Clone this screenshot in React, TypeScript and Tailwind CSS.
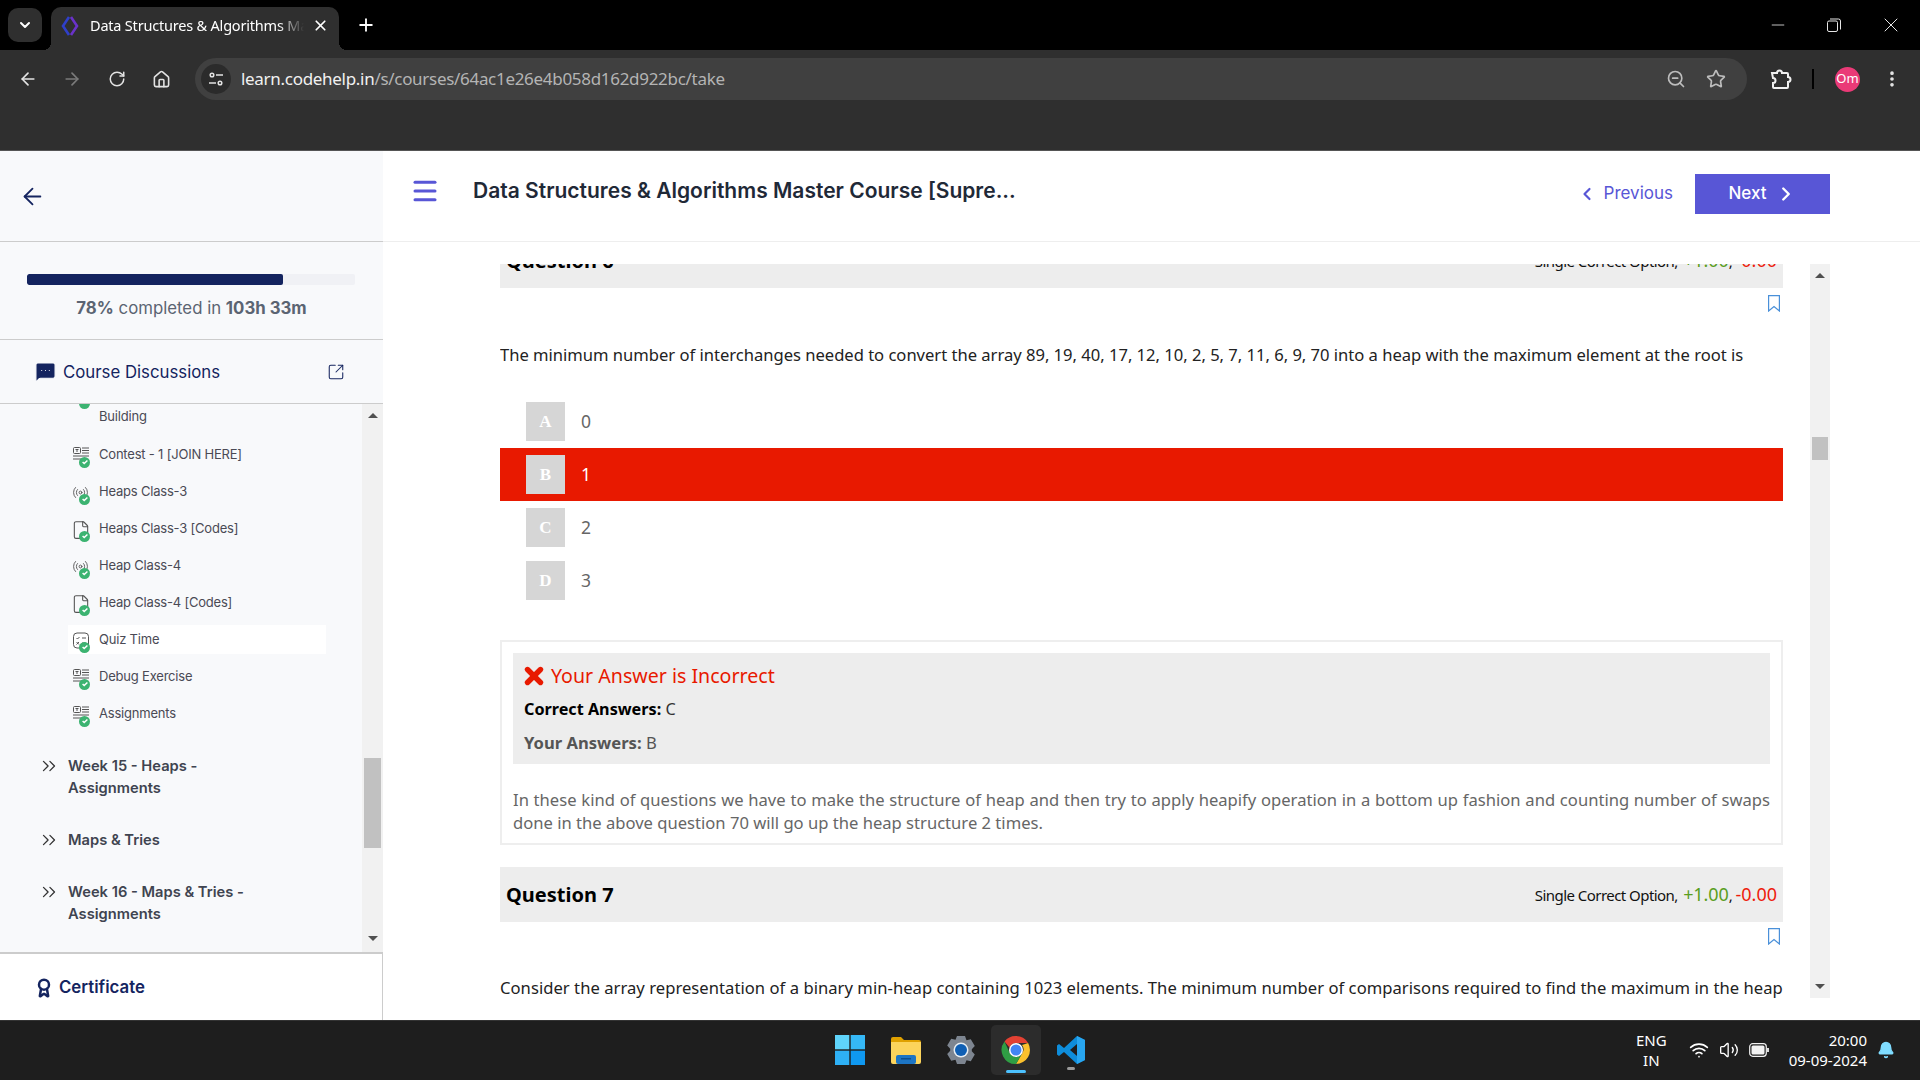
import { ChevronDown, ChevronLeft, ChevronRight, X, Plus, ArrowLeft, ArrowRight, RotateCw, Home, ZoomOut, Star, EllipsisVertical, Minus, Menu, ChevronsRight, SquareArrowOutUpRight, Radio, File, MessageSquareMore, Award, Volume2, Wifi, Bell } from "lucide-react";

const lessons = [
  { title: "Contest - 1 [JOIN HERE]", icon: "text" },
  { title: "Heaps Class-3", icon: "live" },
  { title: "Heaps Class-3 [Codes]", icon: "file" },
  { title: "Heap Class-4", icon: "live" },
  { title: "Heap Class-4 [Codes]", icon: "file" },
  { title: "Quiz Time", icon: "quiz", active: true },
  { title: "Debug Exercise", icon: "text" },
  { title: "Assignments", icon: "text" },
];

function Check() {
  return (
    <span className="absolute left-[7px] top-[10px] flex h-[11px] w-[11px] items-center justify-center rounded-full bg-[#3cb371]">
      <svg viewBox="0 0 10 10" className="h-[8px] w-[8px]" fill="none" stroke="white" strokeWidth="1.8">
        <path d="M2 5l2 2 4-4" />
      </svg>
    </span>
  );
}

function LessonIcon({ kind }: { kind: string }) {
  return (
    <span className="relative mr-[9px] block h-[16px] w-[18px] shrink-0 text-[#555]">
      {kind === "text" && (
        <svg viewBox="0 0 18 16" className="h-[16px] w-[18px]" fill="none" stroke="currentColor" strokeWidth="1">
          <rect x="1.5" y="0.5" width="7" height="6" rx="1" />
          <path d="M10 1h7M10 3.5h7M10 6h7M1 9h16M1 12h9" />
          <path d="M3.5 2.5h3M5 2.5v2.5" />
        </svg>
      )}
      {kind === "live" && <Radio size={17} strokeWidth={1.3} />}
      {kind === "file" && <File size={20} strokeWidth={1.3} className="-ml-[1px] -mt-[1px]" />}
      {kind === "quiz" && (
        <svg viewBox="0 0 18 18" className="h-[18px] w-[18px]" fill="none" stroke="currentColor" strokeWidth="1">
          <rect x="1.5" y="1" width="15" height="15" rx="3.5" />
          <path d="M10 6h4M10 11h4M4.5 6l1 1 2-2M4.5 10l2.5 2.5M7 10l-2.5 2.5" />
        </svg>
      )}
      <Check />
    </span>
  );
}

function Section({ lines, className }: { lines: string[]; className: string }) {
  return (
    <div className={`flex pl-[38px] ${className}`}>
      <ChevronsRight size={22} strokeWidth={1.4} className="mr-[8px] shrink-0 text-[#333]" />
      <div className="text-[14.7px] font-semibold leading-[22px] text-[#3f4450]">
        {lines.map((line) => (
          <div key={line}>{line}</div>
        ))}
      </div>
    </div>
  );
}

function BookmarkIcon() {
  return (
    <svg viewBox="0 0 12 17" className="h-[17px] w-[12px]" fill="none" stroke="#4a90d9" strokeWidth="1.2">
      <path d="M0.6 0.6h10.800v15.400L6 11.500 0.600 16z" />
    </svg>
  );
}

function ChromeBar() {
  return (
    <div className="h-[151px] shrink-0 border-b border-[#555] bg-[#2f2f2f] font-['Noto_Sans',sans-serif] text-white">
      <div className="flex h-[50px] items-end bg-black pl-[8px]">
        <div className="mb-[8px] mr-[9px] flex h-[34px] w-[34px] items-center justify-center rounded-[10px] bg-[#2f2f2f]">
          <ChevronDown size={16} strokeWidth={3} />
        </div>
        <div className="relative flex h-[43px] w-[288px] items-center rounded-t-[10px] bg-[#2f2f2f] pb-[6px] pl-[9px]">
          <span className="absolute -left-[8px] bottom-0 h-[8px] w-[8px] bg-[radial-gradient(circle_at_0_0,transparent_8px,#2f2f2f_8px)]" />
          <span className="absolute -right-[8px] bottom-0 h-[8px] w-[8px] bg-[radial-gradient(circle_at_100%_0,transparent_8px,#2f2f2f_8px)]" />
          <svg viewBox="0 0 20 20" className="mr-[10px] h-[22px] w-[20px] shrink-0" fill="none" strokeWidth="2.6">
            <path d="M9 1L3 10l6 9" stroke="#2f3fc9" />
            <path d="M11 1l6 9-6 9" stroke="#6a32c9" />
          </svg>
          <span className="w-[214px] overflow-hidden whitespace-nowrap text-[14.5px] tracking-[-0.2px] [mask-image:linear-gradient(to_right,black_88%,transparent)]">
            Data Structures & Algorithms Master Course
          </span>
          <X size={17} strokeWidth={2.4} className="ml-[8px]" />
        </div>
        <Plus size={20} strokeWidth={2.2} className="mb-[15px] ml-[17px]" />
        <div className="mb-[13px] ml-auto flex items-center text-[#e6e6e6]">
          <Minus size={20} strokeWidth={1} className="mr-[39px]" />
          <svg viewBox="0 0 14 14" className="mr-[38px] h-[14px] w-[14px]" fill="none" stroke="currentColor">
            <rect x="0.5" y="3" width="10" height="10.5" rx="1.5" />
            <path d="M3 1h8.5a2 2 0 0 1 2 2v8.5" />
          </svg>
          <X size={24} strokeWidth={1} className="mr-[17px]" />
        </div>
      </div>
      <div className="flex h-[58px] items-center">
        <div className="flex w-[195px] shrink-0 items-center text-[#e3e3e3]">
          <ArrowLeft size={20} className="ml-[18px]" />
          <ArrowRight size={20} className="ml-[24px] text-[#7b7b7b]" />
          <RotateCw size={18} className="ml-[26px]" />
          <Home size={19} className="ml-[26px]" />
        </div>
        <div className="flex h-[42px] w-[1552px] items-center rounded-full bg-[#404040] pl-[6px] pr-[21px]">
          <div className="mr-[10px] flex h-[30px] w-[30px] items-center justify-center rounded-full bg-[#2b2b2b]">
            <svg viewBox="0 0 16 16" className="h-[16px] w-[16px]" fill="none" stroke="#e3e3e3" strokeWidth="1.5">
              <circle cx="4" cy="4" r="1.8" />
              <path d="M8 4h7M1 12h7" />
              <circle cx="12" cy="12" r="1.8" />
            </svg>
          </div>
          <span className="text-[17px] tracking-[-0.3px] text-[#f1f1f1]">
            learn.codehelp.in<span className="text-[#b4b4b4]">/s/courses/64ac1e26e4b058d162d922bc/take</span>
          </span>
          <ZoomOut size={20} className="ml-auto mr-[20px] text-[#bdbdbd]" />
          <Star size={20} className="text-[#bdbdbd]" />
        </div>
        <svg viewBox="0 0 22 22" className="ml-[23px] h-[22px] w-[22px]" fill="none" stroke="#f0f0f0" strokeWidth="2">
          <path d="M2 5h5a2.500 2.500 0 0 1 5 0h5a1 1 0 0 1 1 1v3a2.500 2.500 0 0 1 0 5v5a1 1 0 0 1-1 1H4a1 1 0 0 1-1-1v-4a2.500 2.500 0 0 0 0-5z" />
        </svg>
        <span className="ml-[20px] h-[20px] w-[2px] bg-black" />
        <span className="ml-[21px] flex h-[25px] w-[25px] items-center justify-center rounded-full bg-[#ea3a77] text-[13px]">Om</span>
        <EllipsisVertical size={20} strokeWidth={2.4} className="ml-[22px] text-[#e6e6e6]" />
      </div>
    </div>
  );
}

function Sidebar() {
  return (
    <aside className="flex w-[383px] shrink-0 flex-col bg-[#f8f9fb] font-['Inter',sans-serif]">
      <div className="flex h-[91px] shrink-0 items-center border-b border-[#ccc] pl-[19px]">
        <ArrowLeft size={27} strokeWidth={1.6} className="text-[#14245f]" />
      </div>
      <div className="h-[98px] shrink-0 border-b border-[#ccc] px-[27px] pt-[32px]">
        <div className="h-[11px] w-[328px] overflow-hidden rounded-[2px] bg-[#f0f1f5]">
          <div className="h-full w-[256px] rounded-[2px] bg-[#14245f]" />
        </div>
        <p className="mt-[12px] text-center text-[16.8px] leading-[22px] text-[#5b6472]">
          <b className="font-bold">78%</b> completed in <b className="font-bold">103h 33m</b>
        </p>
      </div>
      <div className="flex h-[64px] shrink-0 items-center border-b border-[#ccc] pl-[34px] pr-[38px] text-[#14245f]">
        <MessageSquareMore size={23} fill="#14245f" stroke="#f8f9fb" strokeWidth={1.2} className="mr-[6px]" />
        <span className="mt-[2px] text-[16.8px]">Course Discussions</span>
        <SquareArrowOutUpRight size={18} strokeWidth={1.4} className="ml-auto" />
      </div>
      <div className="flex h-[548px] shrink-0 overflow-hidden">
        <div className="min-w-0 flex-1 text-[13px] tracking-[-0.2px] text-[#4a4a55]">
          <div className="relative h-[25px] pl-[99px] pt-[2px] leading-[20px]">
            <span className="absolute left-[79px] -top-[4px] h-[9px] w-[11px] rounded-b-full bg-[#3cb371]" />
            Building
          </div>
          <div className="mt-[11px]">
            {lessons.map((lesson) => (
              <div key={lesson.title} className={`ml-[68px] mb-[8px] flex h-[29px] w-[258px] items-center pl-[4px] ${lesson.active ? "bg-white" : ""}`}>
                <LessonIcon kind={lesson.icon} />
                <span>{lesson.title}</span>
              </div>
            ))}
          </div>
          <div className="tracking-normal">
            <Section lines={["Week 15 - Heaps -", "Assignments"]} className="mt-[27px]" />
            <Section lines={["Maps & Tries"]} className="mt-[30px]" />
            <Section lines={["Week 16 - Maps & Tries -", "Assignments"]} className="mt-[30px]" />
          </div>
        </div>
        <div className="relative w-[21px] shrink-0 bg-[#f1f1f1]">
          <span className="absolute left-[6px] top-[9px] h-0 w-0 border-x-[5px] border-b-[5px] border-x-transparent border-b-[#505050]" />
          <span className="absolute left-[2px] top-[354px] h-[90px] w-[17px] bg-[#c1c1c1]" />
          <span className="absolute bottom-[11px] left-[6px] h-0 w-0 border-x-[5px] border-t-[5px] border-x-transparent border-t-[#505050]" />
        </div>
      </div>
      <div className="flex flex-1 items-center border-r border-t-2 border-[#ccc] bg-white pl-[34px] pt-[2px] text-[#14245f]">
        <Award size={20} strokeWidth={3} className="mr-[5px]" />
        <span className="text-[16.8px] font-semibold">Certificate</span>
      </div>
    </aside>
  );
}

function Question({ n }: { n: number }) {
  return (
    <div className="flex h-[55px] items-center justify-between bg-[#ededed] pl-[6px] pr-[6px]">
      <span className="text-[20px] font-bold text-black">Question {n}</span>
      <span className="text-[15px] tracking-[-0.55px] text-[#111]">
        Single Correct Option, <span className="ml-[2px] text-[18px] tracking-[-0.1px] text-[#5a9e1f]">+1.00</span>, <span className="text-[18px] tracking-normal text-[#ee1c0c]">-0.00</span>
      </span>
    </div>
  );
}

function Option({ letter, value, picked }: { letter: string; value: string; picked?: boolean }) {
  return (
    <div className={`flex h-[53px] items-center pl-[26px] ${picked ? "bg-[#e81900] text-white" : "text-[#666]"}`}>
      <span className="flex h-[39px] w-[39px] items-center justify-center bg-[#d6d6d6] font-['Liberation_Serif',serif] text-[17px] font-bold text-white">
        {letter}
      </span>
      <span className="ml-[16px] text-[17.5px]">{value}</span>
    </div>
  );
}

function Main() {
  return (
    <main className="flex min-w-0 flex-1 flex-col bg-white">
      <header className="flex h-[91px] shrink-0 items-center border-b border-[#eee] pb-[4px] pl-[27px] pr-[90px] font-['Inter',sans-serif]">
        <Menu size={30} strokeWidth={2.4} className="-mt-[6px] text-[#5856d6]" />
        <h1 className="-mt-[6px] ml-[33px] text-[21px] font-semibold text-[#1f2937]">Data Structures & Algorithms Master Course [Supre...</h1>
        <ChevronLeft size={20} strokeWidth={2.6} className="ml-auto text-[#5856d6]" />
        <span className="ml-[7px] text-[17px] text-[#5856d6]">Previous</span>
        <button className="ml-[22px] flex h-[40px] w-[135px] items-center justify-center bg-[#5856d6] text-[17px] font-medium text-white">
          Next
          <ChevronRight size={22} strokeWidth={2.6} className="ml-[8px]" />
        </button>
      </header>
      <div className="mt-[22px] flex h-[734px] pl-[117px] font-['Noto_Sans',sans-serif]">
        <div className="w-[1283px] overflow-hidden">
          <div className="-mt-[31px] text-[16.6px]">
            <Question n={6} />
            <div className="flex h-[24px] justify-end pr-[3px] pt-[7px]">
              <BookmarkIcon />
            </div>
            <p className="mt-[31px] whitespace-nowrap leading-[24px] tracking-[-0.02px] text-[#222]">
              The minimum number of interchanges needed to convert the array 89, 19, 40, 17, 12, 10, 2, 5, 7, 11, 6, 9, 70 into a heap with the maximum element at the root is
            </p>
            <div className="mt-[28px]">
              <Option letter="A" value="0" />
              <Option letter="B" value="1" picked />
              <Option letter="C" value="2" />
              <Option letter="D" value="3" />
            </div>
            <div className="mt-[33px] h-[205px] border-2 border-[#eee] px-[11px] pt-[11px] text-[#666]">
              <div className="h-[111px] bg-[#ededed] pl-[11px] pt-[9px]">
                <div className="flex h-[28px] items-center text-[19.6px] text-[#e81900]">
                  <X size={26} strokeWidth={5} className="-ml-[3px] mr-[4px]" />
                  Your Answer is Incorrect
                </div>
                <p className="mt-[7px] text-[16.2px] leading-[24px] text-[#333]">
                  <b className="text-black">Correct Answers:</b> C
                </p>
                <p className="mt-[10px] leading-[24px] text-[#555]">
                  <b>Your Answers:</b> B
                </p>
              </div>
              <p className="mt-[24px] text-justify leading-[23px]">
                In these kind of questions we have to make the structure of heap and then try to apply heapify operation in a bottom up fashion and counting number of swaps done in the above question 70 will go up the heap structure 2 times.
              </p>
            </div>
            <div className="mt-[22px]">
              <Question n={7} />
            </div>
            <div className="flex h-[24px] justify-end pr-[3px] pt-[6px]">
              <BookmarkIcon />
            </div>
            <p className="mt-[30px] whitespace-nowrap leading-[24px] tracking-[0.04px] text-[#222]">
              Consider the array representation of a binary min-heap containing 1023 elements. The minimum number of comparisons required to find the maximum in the heap
            </p>
          </div>
        </div>
        <div className="relative ml-[27px] w-[20px] shrink-0 bg-[#f1f1f1]">
          <span className="absolute left-[5px] top-[9px] h-0 w-0 border-x-[5px] border-b-[5px] border-x-transparent border-b-[#505050]" />
          <span className="absolute left-[2px] top-[173px] h-[23px] w-[16px] bg-[#c1c1c1]" />
          <span className="absolute bottom-[9px] left-[5px] h-0 w-0 border-x-[5px] border-t-[5px] border-x-transparent border-t-[#505050]" />
        </div>
      </div>
    </main>
  );
}

function Taskbar() {
  return (
    <div className="grid h-[60px] shrink-0 grid-cols-[1fr_auto_1fr] items-center border-t border-[#333] bg-[#1e1e1e] pb-[1px] font-['Noto_Sans',sans-serif] text-white">
      <div />
      <div className="flex items-center">
        <svg viewBox="0 0 30 30" className="h-[30px] w-[30px]">
          <rect x="0" y="0" width="14.3" height="14.3" fill="#5fd4fb" />
          <rect x="15.7" y="0" width="14.3" height="14.3" fill="#35b8f6" />
          <rect x="0" y="15.7" width="14.3" height="14.3" fill="#2eb0f5" />
          <rect x="15.7" y="15.7" width="14.3" height="14.3" fill="#0f98f0" />
        </svg>
        <svg viewBox="0 0 30 28" className="ml-[26px] h-[28px] w-[30px]">
          <path d="M0 3a2 2 0 0 1 2-2h8l3 3h15a2 2 0 0 1 2 2v4H0z" fill="#e0a100" />
          <path d="M0 6h30v20a2 2 0 0 1-2 2H2a2 2 0 0 1-2-2z" fill="#fcd45c" />
          <rect x="5" y="19" width="20" height="9" rx="2" fill="#1d75c4" />
          <rect x="10" y="22" width="10" height="1.5" fill="#0c4f8f" />
        </svg>
        <svg viewBox="0 0 30 30" className="ml-[25px] h-[30px] w-[30px]">
          <path d="M11 1h8l1.5 4.2 4.3-1 4 6.8-3 3.2 0 2 3 3.2-4 6.8-4.3-1L19 29h-8l-1.500-4.200-4.300 1-4-6.800 3-3.200 0-2-3-3.200 4-6.800 4.300 1z" fill="#7d8590" />
          <circle cx="15" cy="15" r="7.500" fill="#e6edf3" />
          <circle cx="15" cy="15" r="6" fill="#0f5fb4" />
        </svg>
        <div className="relative ml-[15px] flex h-[50px] w-[50px] items-center justify-center rounded-[5px] bg-[#2c2c2c]">
          <svg viewBox="0 0 30 30" className="h-[30px] w-[30px]">
            <path d="M15 1a14 14 0 0 1 12.100 7H15a7 7 0 0 0-6.500 4.500L3.500 6.500A14 14 0 0 1 15 1z" fill="#e34133" />
            <path d="M27.100 8A14 14 0 0 1 15 29l6.100-10.500A7 7 0 0 0 21 10z" fill="#fbc02d" />
            <path d="M3.500 6.500A14 14 0 0 0 15 29l6.100-10.500A7 7 0 0 1 9 18.500z" fill="#2f9e44" />
            <circle cx="15" cy="15" r="7" fill="white" />
            <circle cx="15" cy="15" r="5.500" fill="#4285f4" />
          </svg>
          <span className="absolute bottom-[2px] left-[15px] h-[3px] w-[20px] rounded-full bg-[#4cc2ff]" />
        </div>
        <div className="relative ml-[15px] h-[30px] w-[30px]">
          <svg viewBox="0 0 30 30" className="h-[30px] w-[30px]">
            <path d="M21 1l8 4v20l-8 4L8 17l-5 4-2-1.500V10.500L3 9l5 4z" fill="#0e8ddb" />
            <path d="M21 1l8 4v20l-8 4z" fill="#28a6f0" />
            <path d="M21 9l-7 6 7 6z" fill="#1e1e1e" />
          </svg>
          <span className="absolute -bottom-[5px] left-[11px] h-[3px] w-[8px] rounded-full bg-[#9a9a9a]" />
        </div>
      </div>
      <div className="flex items-center justify-end pr-[25px] text-[15px]">
        <div className="text-center leading-[20px]">
          ENG
          <br />
          IN
        </div>
        <Wifi size={20} strokeWidth={2} className="ml-[22px]" />
        <Volume2 size={20} strokeWidth={1.6} className="ml-[10px]" />
        <svg viewBox="0 0 20 14" className="ml-[10px] h-[14px] w-[20px]" fill="none" stroke="#f2f2f2" strokeWidth="1.2">
          <rect x="0.7" y="0.7" width="16.600" height="12.600" rx="3" />
          <rect x="2.500" y="2.500" width="13" height="9" rx="1.500" fill="#f2f2f2" stroke="none" />
          <path d="M19 5v4" strokeWidth="1.800" />
        </svg>
        <div className="ml-[20px] text-right leading-[20px]">
          20:00
          <br />
          09-09-2024
        </div>
        <Bell size={18} fill="#7fdcff" stroke="#7fdcff" className="ml-[10px]" />
      </div>
    </div>
  );
}

export default function App() {
  return (
    <div className="flex h-[1080px] w-[1920px] flex-col overflow-hidden bg-white">
      <ChromeBar />
      <div className="flex h-[869px] shrink-0">
        <Sidebar />
        <Main />
      </div>
      <Taskbar />
    </div>
  );
}
